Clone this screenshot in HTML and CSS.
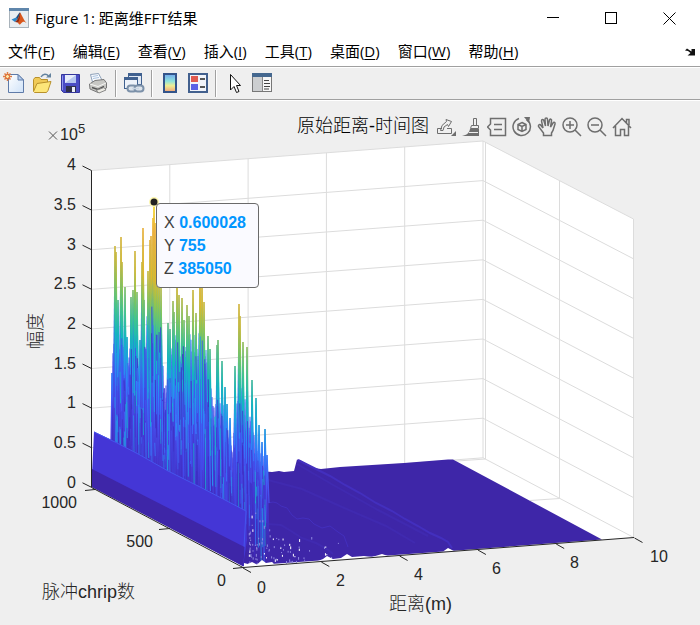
FILE: index.html
```html
<!DOCTYPE html>
<html lang="zh-CN">
<head>
    <meta charset="UTF-8">
    <meta name="viewport" content="width=device-width, initial-scale=1.0">
    <title>Figure 1: 距离维FFT结果</title>
    <link rel="stylesheet" href="styles.css">
</head>
<body>
    <header class="titlebar">
        <svg class="app-icon" width="20" height="20" viewBox="0 0 20 20">
            <rect x="0.5" y="0.5" width="19" height="19" fill="#e9edf0" stroke="#a9b3bb"/>
            <rect width="20" height="3" fill="#5f86ab"/>
            <path d="M2.500 11.500 7 9.500 9 11.500 6 14z" fill="#2f86c8"/>
            <path d="M7 9.500 10.500 4.500 11.500 5 9 11.500z" fill="#1d4f80"/>
            <path d="M11 4.500C12.500 6 14 11 17.500 15 15 13.500 14 13 12 15.500 11 17 10 17 9 14.500 8.500 13.500 7.500 13.500 6 14 9 12 10 8 11 4.500z" fill="#d8571c"/>
            <path d="M11 4.500C10.500 8 9.500 12 6 14L9 14.500C10.500 12 11.500 9 11 4.500z" fill="#8c2a14"/>
        </svg>
        <h1 class="window-title">Figure 1: 距离维FFT结果</h1>
        <div class="window-controls">
            <button aria-label="Minimize"><svg width="14" height="14"><path d="M1 6.500H13" stroke="#000"/></svg></button>
            <button aria-label="Maximize"><svg width="14" height="14"><rect x="1.5" y="1.5" width="11" height="11" fill="none" stroke="#000"/></svg></button>
            <button aria-label="Close"><svg width="14" height="14"><path d="M1.500 1.500 13.500 13.500M13.500 1.500 1.500 13.500" stroke="#000"/></svg></button>
        </div>
    </header>

    <nav class="menubar">
        <button>文件(<u>F</u>)</button>
        <button>编辑(<u>E</u>)</button>
        <button>查看(<u>V</u>)</button>
        <button>插入(<u>I</u>)</button>
        <button>工具(<u>T</u>)</button>
        <button>桌面(<u>D</u>)</button>
        <button>窗口(<u>W</u>)</button>
        <button>帮助(<u>H</u>)</button>
        <button class="dock" aria-label="Dock figure"><svg width="10" height="8"><path d="M0 2.500 2 .5 6.500 3.500V1H10V7.500H2.500L5.500 5 3 3z" fill="#111"/></svg></button>
    </nav>

    <div class="toolbar">
        <button aria-label="New figure">
            <svg width="22" height="22" viewBox="0 0 22 22">
                <defs><linearGradient id="page" x2="1" y2="1"><stop offset="0" stop-color="#fff"/><stop offset="1" stop-color="#cfe2f8"/></linearGradient></defs>
                <path d="M5.500 2.500H15L20.500 8V20.500H5.500z" fill="url(#page)" stroke="#5f7ba8"/>
                <path d="M15 2.500V8H20.500z" fill="#b5cdec" stroke="#5f7ba8"/>
                <path d="M4.500 0V9M0 4.500H9M1.500 1.500 7.500 7.500M7.500 1.500 1.500 7.500" stroke="#e07b42" stroke-width="1.500"/>
                <circle cx="4.500" cy="4.500" r="2" fill="#ffe9a8" stroke="#d9622b"/>
            </svg>
        </button>
        <button aria-label="Open file">
            <svg width="22" height="22" viewBox="0 0 22 22">
                <path d="M2.500 19V7.500L4 5.500H8.500L10 7.500H16.500V11" fill="#f0ca57" stroke="#b8912c"/>
                <path d="M2.500 19.500 6 11.500 20 9.500 17 18.500 15.500 20.500H3.500z" fill="#fde679" stroke="#b8912c"/>
                <path d="M10 5C12 1.500 15.500 1.500 17.500 4" fill="none" stroke="#64839f" stroke-width="1.500"/>
                <path d="M15 5.500H20V1z" fill="#64839f"/>
            </svg>
        </button>
        <button aria-label="Save figure">
            <svg width="22" height="22" viewBox="0 0 22 22">
                <path d="M2.500 2.500H20.500V20.500H4.500L2.500 18.500z" fill="#494cc4" stroke="#34369c"/>
                <path d="M3.500 3.500V18" stroke="#8e94ee"/>
                <path d="M6 3H17V11H6z" fill="#e6ecfb"/>
                <path d="M6 11 17 3V11z" fill="#b5c6ef"/>
                <path d="M7 14H17V20H7z" fill="#30324c"/>
                <path d="M13 15H16V20H13z" fill="#e9edf8"/>
            </svg>
        </button>
        <button aria-label="Print figure">
            <svg width="22" height="22" viewBox="0 0 22 22">
                <path d="M5.500 10 3.500 2.500 11.500 1.500 15.500 9" fill="#f9fbff" stroke="#8da0b8"/>
                <path d="M5.500 4.500 11 3.500M6 6.500 12 5.500" stroke="#aac2de"/>
                <path d="M2.500 12 8 8.500 17 7.500 19.500 11V16L11 20.500 3 17z" fill="#c7c7c4" stroke="#777"/>
                <path d="M3 12 11 14.500 19 11" fill="none" stroke="#f6f6f4"/>
                <path d="M5 15.500 11 17.500 17 14.500" fill="none" stroke="#555" stroke-width="1.500"/>
                <path d="M9 18.500 17 15.500 19 18 12 21z" fill="#ecebe4" stroke="#888"/>
            </svg>
        </button>
        <span class="separator"></span>
        <button aria-label="Link plot">
            <svg width="22" height="22" viewBox="0 0 22 22">
                <rect x="5.5" y="1.5" width="13" height="11" fill="#dfe8f4" stroke="#3f608f"/>
                <path d="M5 2.500H19" stroke="#3f608f" stroke-width="3"/>
                <rect x="1.5" y="5.5" width="13" height="11" fill="#edf2f9" stroke="#3f608f"/>
                <path d="M1 6.500H15" stroke="#3f608f" stroke-width="3"/>
                <rect x="4.5" y="13.5" width="9" height="6" rx="3" fill="#dce3eb" stroke="#7c91a9" stroke-width="2"/>
                <rect x="11.5" y="13.5" width="9" height="6" rx="3" fill="#dce3eb" stroke="#7c91a9" stroke-width="2"/>
                <path d="M9 16.500H16" stroke="#c9d5e2" stroke-width="1.500"/>
            </svg>
        </button>
        <span class="separator"></span>
        <button aria-label="Insert colorbar">
            <svg width="22" height="22" viewBox="0 0 22 22">
                <defs><linearGradient id="bar" x2="0" y2="1"><stop offset="0" stop-color="#71a6ee"/><stop offset=".4" stop-color="#8fe3dc"/><stop offset=".65" stop-color="#f0ee93"/><stop offset="1" stop-color="#f0a078"/></linearGradient></defs>
                <rect x="5" y="2" width="12" height="18" fill="url(#bar)" stroke="#34548a" stroke-width="2"/>
            </svg>
        </button>
        <button aria-label="Insert legend">
            <svg width="22" height="22" viewBox="0 0 22 22">
                <rect x="2" y="2" width="18" height="18" fill="#f1f4fa" stroke="#42608e" stroke-width="2"/>
                <rect x="4" y="4" width="7" height="6" fill="#e05a50"/>
                <rect x="4" y="12" width="7" height="6" fill="#5a61e6"/>
                <path d="M13 7H18M13 15H18" stroke="#222" stroke-width="1.500"/>
            </svg>
        </button>
        <span class="separator"></span>
        <button aria-label="Edit plot">
            <svg width="22" height="22" viewBox="0 0 22 22">
                <path d="M7.500 2.500V18L11 14.500 13.500 20.500 16 19.500 13.500 13.500H17.500z" fill="#fff" stroke="#111"/>
            </svg>
        </button>
        <button aria-label="Open property inspector">
            <svg width="22" height="22" viewBox="0 0 22 22">
                <rect x="1.5" y="1.5" width="19" height="18" fill="#dcdddf" stroke="#777"/>
                <rect x="1" y="1" width="20" height="4" fill="#45688f"/>
                <rect x="2" y="5" width="10" height="14" fill="#ccced0"/>
                <rect x="12" y="5" width="8" height="14" fill="#f7f7f7"/>
                <path d="M11.500 5V19" stroke="#888"/>
                <path d="M13 8.500H18M13 11.500H19M13 14.500H19M13 17H18" stroke="#444"/>
            </svg>
        </button>
    </div>

    <main class="figure">
        <svg class="plot" viewBox="0 101 700 524" role="img" aria-label="原始距离-时间图">
            <defs>
                <!-- parula, running along the height above the floor at 0.6 m -->
                <linearGradient id="parula" gradientUnits="userSpaceOnUse" x1="115" y1="485" x2="241" y2="247">
                    <stop offset="0" stop-color="#3e26a8"/>
                    <stop offset=".13" stop-color="#4537d4"/>
                    <stop offset=".26" stop-color="#4757f5"/>
                    <stop offset=".36" stop-color="#2f80fa"/>
                    <stop offset=".43" stop-color="#1ca4e2"/>
                    <stop offset=".5" stop-color="#12b8bd"/>
                    <stop offset=".58" stop-color="#42c68a"/>
                    <stop offset=".66" stop-color="#8fc650"/>
                    <stop offset=".74" stop-color="#dfb92c"/>
                    <stop offset=".9" stop-color="#fbb034"/>
                    <stop offset="1" stop-color="#f7ec1c"/>
                </linearGradient>
                <linearGradient id="shade" gradientUnits="userSpaceOnUse" x1="115" y1="485" x2="241" y2="247">
                    <stop offset="0" stop-color="#3e26a8"/>
                    <stop offset=".2" stop-color="#4333cc"/>
                    <stop offset=".38" stop-color="#4545e6"/>
                    <stop offset=".52" stop-color="#3c67ee"/>
                    <stop offset=".64" stop-color="#2f95e0"/>
                    <stop offset=".76" stop-color="#58b98c"/>
                    <stop offset="1" stop-color="#e8a840"/>
                </linearGradient>
            </defs>

            <path class="wall" d="M91.500 170.500 483 141 633.500 219V537.500L242 567.500 91.500 487.500z"/>
            <g id="grid" class="grid"></g>

            <path class="floor" d="M240 480 266 471.500 272 472 279 471 284 472 294 471 297 459.500 300 460 314 468 321 469 340 467 372 465 404 463 448 459.500 453 459.500 602 539.500 450 551 242 566z"/>
            <path class="ridge" d="M298 460 316 469 330 476 345 485 360 493 376 503 392 511 405 519 418 526 430 533 441 538 448 542 452 548"/>
            <path class="ridge faint" d="M297 464 335 486 378 510 428 536"/>
            <path class="ridge thin" d="M268 503 273 502 277 503 281 506 287 508 292 515 297 519 303 518 309 519 314 524 322 528 330 526 338 532 344 536 348 547"/>
            <path class="ridge faint" d="M268 524 281 525 291 531 302 538 316 543 327 549 333 554M268 480 302 489 342 507 386 526 415 543"/>
            <g id="spikes"></g>
            <path class="ramp" d="M91.500 485 94 431.500 97 433 116 442 140 455 168 471 200 487 225 500 246 511 247 540 243 566z"/>
            <path class="ramp-edge" d="M94 432 116 442.500 140 455 168 471 200 487 225 500 246 511 243 566"/>
            <path class="ramp-foot" d="M92 469 244.500 547 243.500 566.500 91.500 487z"/>
            <g id="specks"></g>
            <path class="gap-edge" d="M244 567.500V563L248 564 252 562 257 564.500 262 560 266 563 272 562 275 565zM318 561 323 559 327 556 333 559 341 558 347 554 352 557 364 556 372 557 382 554 388 556zM443 551.500 448 548 454 551z"/>

            <path class="axis" d="M91.500 170.500V487.500L243 567.500 634 537.500"/>
            <g id="ticks" class="axis"></g>

            <g class="tick-label end">
                <text x="76" y="170">4</text>
                <text x="76" y="210">3.5</text>
                <text x="76" y="250">3</text>
                <text x="76" y="289">2.5</text>
                <text x="76" y="329">2</text>
                <text x="76" y="369">1.5</text>
                <text x="76" y="408">1</text>
                <text x="76" y="448">0.5</text>
                <text x="76" y="488">0</text>
                <text x="77" y="508">1000</text>
                <text x="153" y="547">500</text>
                <text x="226" y="586">0</text>
            </g>
            <g class="tick-label">
                <text x="257" y="593">0</text>
                <text x="336" y="586">2</text>
                <text x="414" y="580">4</text>
                <text x="492" y="574">6</text>
                <text x="570" y="568">8</text>
                <text x="650" y="562">10</text>
                <text x="60" y="140">10</text>
                <text class="exponent" x="78" y="133">5</text>
            </g>
            <path class="times" d="M49 131.500 57 139.500M57 131.500 49 139.500"/>
            <text class="axis-title" x="297" y="132">原始距离-时间图</text>
            <text class="axis-label" x="389" y="610">距离(m)</text>
            <text class="axis-label" x="42" y="598">脉冲chrip数</text>
            <text class="axis-label" transform="translate(42 349) rotate(-90)">幅度</text>
            <circle cx="154" cy="202" r="5" fill="#fdf7b0"/>
            <circle cx="154" cy="202" r="3.500" fill="#222"/>
        </svg>

        <div class="axes-toolbar">
            <button class="wide" aria-label="Export">
                <svg width="20" height="20" viewBox="0 0 20 20"><path d="M6 11.500H1.500V16.500H15.500V11.500H11M4.500 13.500 6 8.500 10.500 4.500 10 2.500 15.500 4.500 12.500 9.500 11.500 7.500 8 10 7 13.500z"/><path class="solid" d="M20 14V19H15z"/></svg>
            </button>
            <button aria-label="Brush">
                <svg width="20" height="20" viewBox="0 0 20 20"><path d="M11.500 1.500H14.500V8.500H11.500zM9.500 8.500H16.500V11.500H8.500z"/><path class="solid" d="M8 12H17V19H0C5 18 7 16 8 12z"/><path d="M7 15.500H16" stroke="#efefef"/></svg>
            </button>
            <button aria-label="Data tips">
                <svg width="20" height="20" viewBox="0 0 20 20"><path d="M3.500 1.500H18.500V18.500H3.500V13L.5 10 3.500 7zM7 7.500H15M7 12.500H15" stroke-width="1.500"/></svg>
            </button>
            <button aria-label="Rotate">
                <svg width="20" height="20" viewBox="0 0 20 20"><path d="M14.500 2.500A8.700 8.700 0 1 1 7 1.500" stroke-width="1.500"/><path class="solid" d="M12 0H18L17 6z"/><path d="M10 5.500 14 7.500V12.500L10 14.500 6 12.500V7.500zM6 7.500 10 9.500 14 7.500M10 9.500V14.500" stroke-width="1.500"/></svg>
            </button>
            <button aria-label="Pan">
                <svg width="20" height="20" viewBox="0 0 20 20"><path d="M6.500 18.500V16L1.500 9.500C1 7.500 3 7 4 8.500L6 11 4.500 4C4.500 2 6.500 2 7 4L8.500 9 8 2.500C8 .5 10.500.5 10.500 2.500L11 9 12.500 3C13 1.500 15 2 14.500 4L13.500 10 16 6C17 4.500 18.500 5.500 18 7L16 13.500 14.500 16V18.500z" stroke-width="1.500"/></svg>
            </button>
            <button aria-label="Zoom in">
                <svg width="20" height="20" viewBox="0 0 20 20"><circle cx="8" cy="8" r="7" stroke-width="1.500"/><path d="M4 8H12M8 4V12M13 13 19 19" stroke-width="1.500"/></svg>
            </button>
            <button aria-label="Zoom out">
                <svg width="20" height="20" viewBox="0 0 20 20"><circle cx="8" cy="8" r="7" stroke-width="1.500"/><path d="M4 8H12M13 13 19 19" stroke-width="1.500"/></svg>
            </button>
            <button aria-label="Restore view">
                <svg width="20" height="20" viewBox="0 0 20 20"><path d="M1 11 10 1.500 19 11M3.500 9V18.500H8.500V12.500H12.500V18.500H16.500V9M14.500 6V2.500H17V8" stroke-width="1.500"/></svg>
            </button>
        </div>

        <div class="datatip">
            <div>X <b>0.600028</b></div>
            <div>Y <b>755</b></div>
            <div>Z <b>385050</b></div>
        </div>
    </main>
    <script src="plot.js"></script>
</body>
</html>
```

FILE: styles.css
```css
body {
    margin: 0;
    background: #efefef;
    color: #000;
    font-family: "Open Sans", "Noto Sans CJK SC", sans-serif;
    font-size: 15px;
}

button {
    margin: 0;
    padding: 0;
    border: none;
    background: none;
    color: inherit;
    font: inherit;
    display: flex;
    align-items: center;
    justify-content: center;
}

/* window chrome */
.titlebar {
    display: flex;
    align-items: center;
    height: 36px;
    padding: 0 2px 0 9px;
    background: #fff;
}

.window-title {
    flex: 1;
    margin: 0 0 0 6px;
    padding-bottom: 2px;
    font-size: 15px;
    font-weight: 400;
}

.window-controls {
    display: flex;
}

.window-controls button {
    width: 58px;
    height: 36px;
}

.menubar {
    display: flex;
    align-items: center;
    gap: 18px;
    height: 28px;
    padding: 0 5px 2px 8px;
    background: #fff;
    border-bottom: 1px solid #a0a0a0;
    white-space: nowrap;
}

.menubar button {
    display: block;
}

.menubar u {
    text-underline-offset: 2px;
}

.menubar .dock {
    margin-left: auto;
}

.toolbar {
    display: flex;
    align-items: center;
    height: 31px;
    border-top: 1px solid #fff;
    border-bottom: 1px solid #a0a0a0;
}

.toolbar button {
    width: 28px;
    height: 30px;
    padding-bottom: 2px;
}

.separator {
    width: 1px;
    height: 27px;
    margin: 0 3px;
    background: #a0a0a0;
    border-right: 1px solid #fff;
}

/* figure area */
.figure {
    position: relative;
    border-top: 1px solid #fff;
    font-family: "Liberation Sans", "Noto Sans CJK SC", sans-serif;
}

.plot {
    display: block;
    width: 100%;
}

.wall {
    fill: #fff;
}

.grid {
    fill: none;
    stroke: #dcdcdc;
}

.floor {
    fill: #3e26a8;
}

.ridge {
    fill: none;
    stroke: #432fbe;
    stroke-width: 2;
}

.ridge.faint {
    stroke: #402ab0;
}

.ridge.thin {
    stroke-width: 1;
}

.ramp {
    fill: #4436d6;
}

.ramp-edge {
    fill: none;
    stroke: #4655ee;
}

.ramp-foot {
    fill: #3e26a8;
}

.gap-edge {
    fill: #fff;
}

.axis {
    fill: none;
    stroke: #262626;
}

.tick-label {
    fill: #262626;
    font-size: 16px;
}

.end {
    text-anchor: end;
}

.exponent {
    font-size: 13px;
}

.times {
    stroke: #555;
}

.axis-title,
.axis-label {
    font-size: 18px;
    font-weight: 300;
    fill: #262626;
}

.axis-title {
    fill: #000;
}

.axes-toolbar {
    position: absolute;
    left: 62%;
    top: 3%;
    display: flex;
    margin-left: -2px;
}

.axes-toolbar button {
    width: 25px;
    height: 20px;
}

.axes-toolbar .wide {
    width: 27px;
}

.axes-toolbar svg {
    fill: none;
    stroke: #6e6e6e;
}

.axes-toolbar .solid {
    fill: #6e6e6e;
    stroke: none;
}

.datatip {
    position: absolute;
    left: 22.3%;
    top: 19.5%;
    padding: 7px 12px 7px 7px;
    border: 1px solid #6a6a6a;
    border-radius: 4px;
    background: #fafaff;
    color: #404040;
    font-size: 16px;
    line-height: 23px;
}

.datatip b {
    color: #0096ff;
}
```

FILE: plot.js
```js
const NS = 'http://www.w3.org/2000/svg';

function add(parent, d, attrs) {
    const path = document.createElementNS(NS, 'path');
    path.setAttribute('d', d);
    for (const key in attrs || {}) {
        path.setAttribute(key, attrs[key]);
    }
    document.getElementById(parent).appendChild(path);
}

// fixed seed, so the surface looks the same on each load
let seed = 41;
function random() {
    seed = (seed * 16807) % 2147483647;
    return seed / 2147483647;
}

// grid lines of the two back walls
for (let i = 0; i <= 8; i++) {
    const y = i * 39.6;
    add('grid', `M91.5 ${170.5 + y} 483 ${141 + y} 633.5 ${219 + i * 39.8}`);
    add('ticks', `M91.5 ${170.5 + y} l-9 -4.5`);
}
for (let i = 1; i <= 5; i++) {
    const x = 91.5 + i * 78.3;
    add('grid', `M${x} ${170.5 - i * 5.9} v317`);
}
add('grid', 'M485.5 142V459M559.5 180.5V498.5M633.5 219V537.5M559.5 498.5 530 500.5M485.5 459 450 461.5');
add('ticks', 'M95 489.5 85 490.5M170 528.5 159 529.5M243 567.5 233 568.5');
for (let i = 0; i <= 5; i++) {
    add('ticks', `M${243 + i * 78.3} ${568 - i * 6} l8 4.5`);
}

// height of the floor under the strong echoes
function base(x) {
    return Math.min(485 + (x - 115) * 0.53, 563);
}

// upper edge of the dense part
const envelope = [[111, 400], [114, 330], [120, 320], [126, 345], [134, 330], [140, 352], [147, 310],
    [154, 280], [160, 300], [165, 385], [170, 340], [178, 330], [186, 335], [194, 330], [202, 325], [208, 360],
    [213, 405], [218, 385], [225, 405], [232, 440], [237, 400], [243, 385], [250, 415], [257, 440],
    [263, 455], [268, 490], [273, 530]];

function denseTop(x) {
    for (let i = 1; i < envelope.length; i++) {
        const [x0, y0] = envelope[i - 1];
        const [x1, y1] = envelope[i];
        if (x <= x1) return y0 + (y1 - y0) * (x - x0) / (x1 - x0);
    }
    return 530;
}

for (let x = 113; x < 269; x += 1) {
    const y = denseTop(x) + random() * 35;
    add('spikes', `M${x - 2} ${base(x)} L${x - 0.5} ${y} h1 L${x + 2} ${base(x)}z`, { fill: 'url(#shade)' });
}

const peaks = [[112, 373], [115, 246], [116, 252], [118, 300], [121, 237], [122, 262], [125, 287], [127, 337], [131, 297],
    [133, 290], [135, 251], [137, 292], [140, 340], [142, 262], [143, 228], [144, 300], [148, 271], [150, 240],
    [151, 236], [153, 218], [154, 205], [155, 223], [157, 260], [159, 270], [161, 287], [168, 323], [170, 329], [173, 301],
    [174, 312], [177, 280], [179, 295], [182, 298], [184, 320], [187, 305], [189, 316], [193, 290], [196, 313],
    [200, 270], [202, 280], [204, 302], [208, 336], [210, 349], [217, 345], [218, 340], [222, 361], [225, 387],
    [227, 404], [230, 418], [235, 366], [239, 304], [240, 316], [243, 342], [247, 347], [252, 380], [256, 398], [259, 425],
    [262, 442], [265, 429], [267, 455]];

for (const [x, y] of peaks) {
    const b = base(x);
    const foot = x < 115 ? 1 : 3;
    add('spikes', `M${x - foot} ${b} L${x - 0.5} ${y} h1 L${x + 3} ${b}z`, { fill: 'url(#shade)' });
    add('spikes', `M${x - 1} ${b - 40} L${x} ${y} L${x + 2} ${b - 60}`, { fill: 'none', stroke: 'url(#parula)', 'stroke-width': 1.3 });
}

// thin edges between neighbouring pulses
const edges = ['#4250f2', '#3a78fb', '#2797eb', '#16b2cf', '#3e2ac0', '#4236cf', '#3f2fc4', '#4443e0', '#4140d8'];
for (let i = 0; i < 300; i++) {
    const x = 114 + random() * 151;
    const t = denseTop(x) + 10;
    const y = t + random() * Math.max(10, base(x) - t - 50);
    const length = 12 + random() * 65;
    const color = edges[Math.floor(random() * edges.length)];
    add('spikes', `M${x} ${y} L${x + 0.5} ${Math.min(y + length, base(x))}`, { stroke: color, 'stroke-opacity': 0.8 });
}

// holes in the mesh close to the front edge
for (let i = 0; i < 90; i++) {
    const x = 249 + random() * random() * 110;
    const y = 565 - (x - 243) * 0.075 - random() * random() * Math.max(8, 55 - (x - 249) * 0.3);
    add('specks', `M${x} ${y} v${1 + random() * 2}`, { stroke: i % 4 ? '#8f88e0' : '#fff' });
}
```
